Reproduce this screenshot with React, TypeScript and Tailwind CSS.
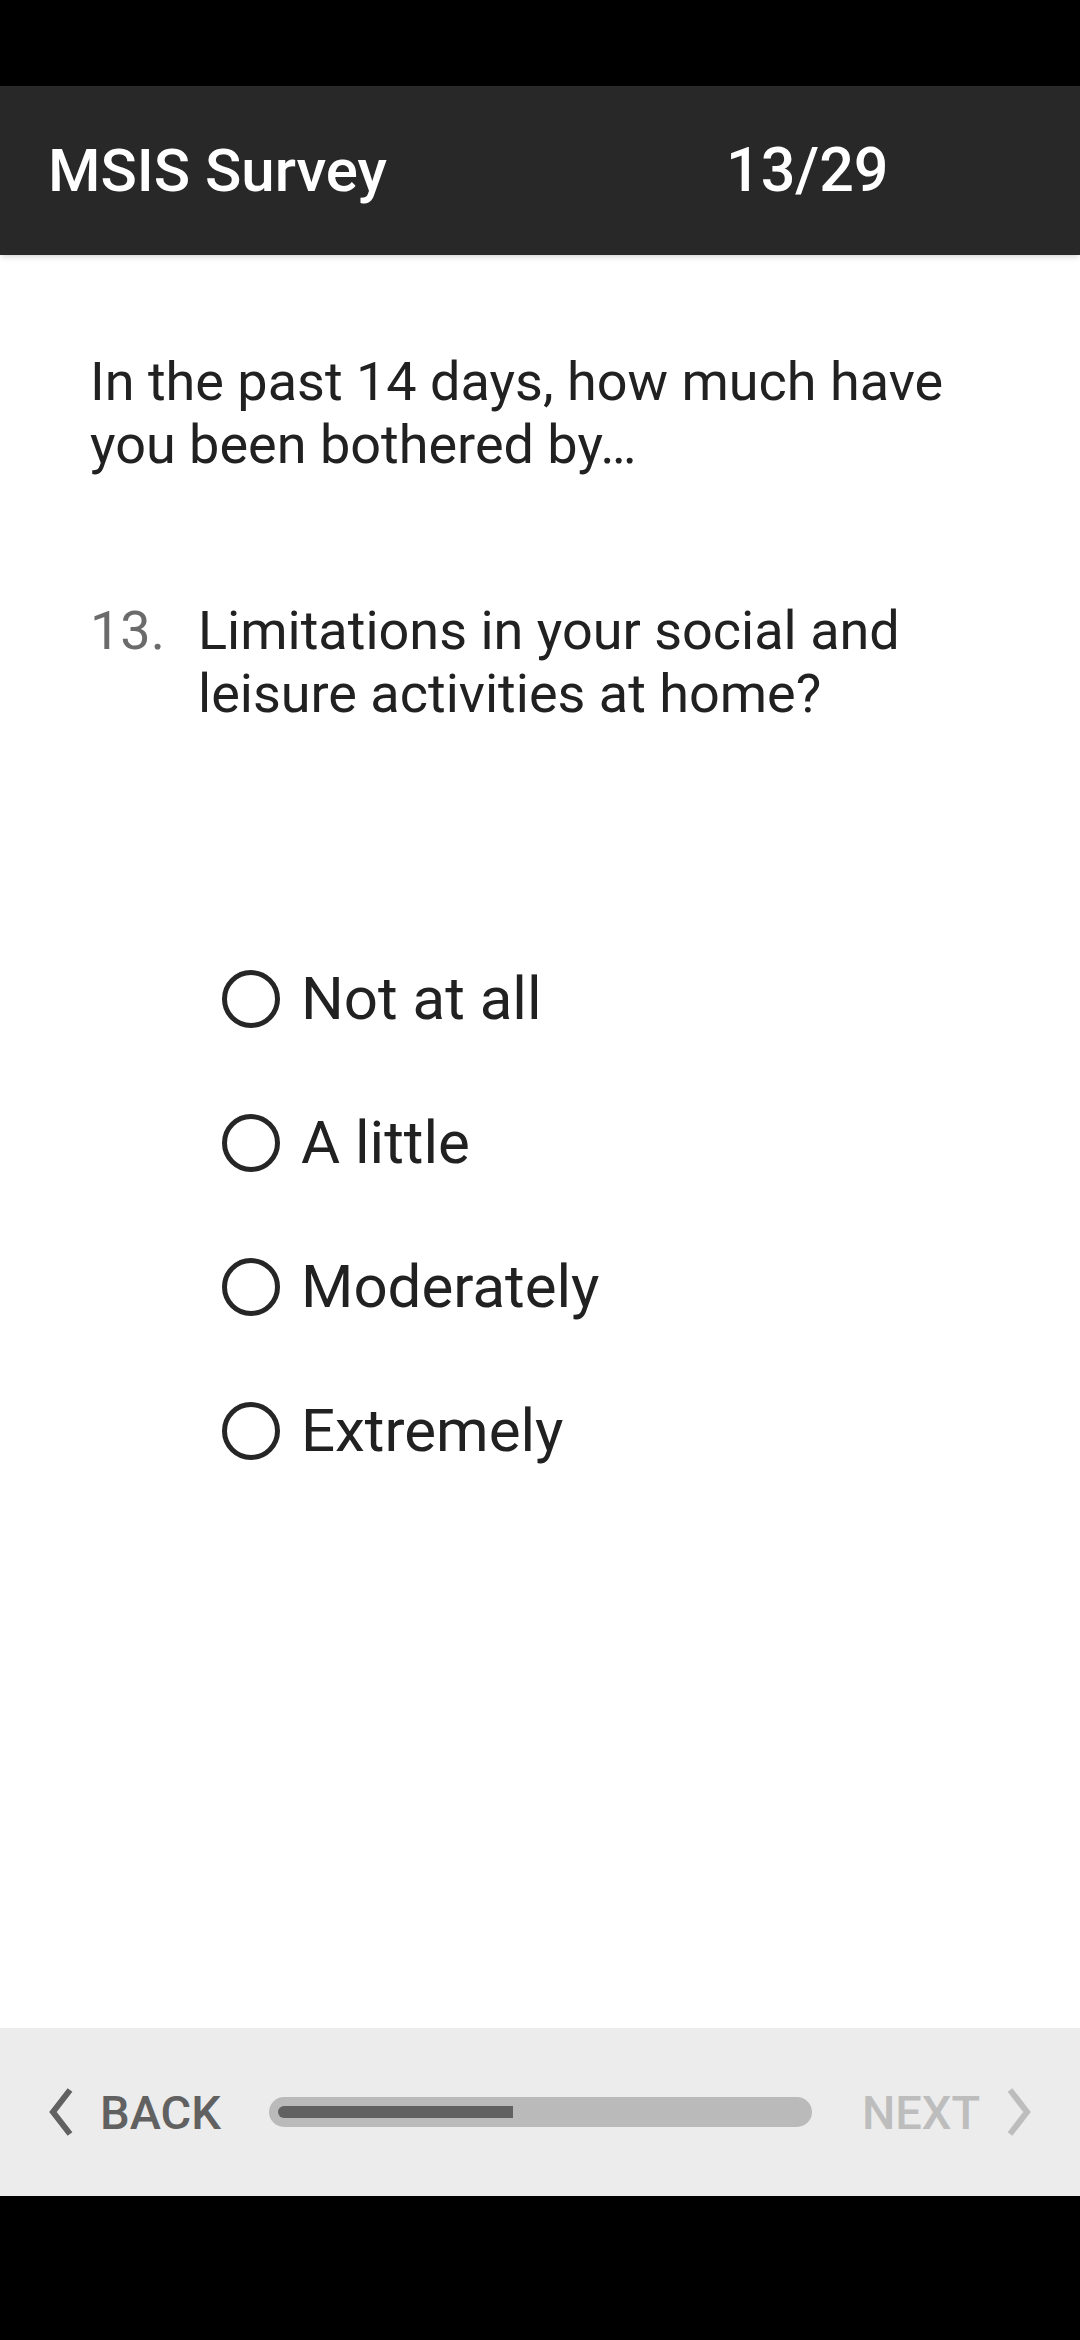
import React from "react";

const options = ["Not at all", "A little", "Moderately", "Extremely"];

const Chevron = ({ dir, color }: { dir: "left" | "right"; color: string }) => (
  <svg width="26" height="50" viewBox="0 0 26 50" className="shrink-0">
    <polyline
      points={dir === "left" ? "22,3 5,25 22,47" : "4,3 21,25 4,47"}
      fill="none"
      stroke={color}
      strokeWidth="6"
    />
  </svg>
);

export default function App() {
  const current = 13;
  const total = 29;
  const pct = (current / total) * 100;

  return (
    <div
      className="flex h-[2340px] w-[1080px] flex-col bg-white"
      style={{ fontFamily: "Roboto, 'Noto Sans', sans-serif" }}
    >
      {/* status bar */}
      <div className="h-[86px] shrink-0 bg-black" />

      {/* app bar */}
      <div className="relative z-10 flex h-[169px] shrink-0 items-center bg-[#282828] pl-[48px] shadow-md">
        <div className="w-[678px] text-[60px] font-medium leading-none text-white">MSIS Survey</div>
        <div className="text-[61px] font-medium leading-none text-white">
          {current}/{total}
        </div>
      </div>

      {/* content */}
      <div className="flex flex-1 flex-col pt-[95px]">
        <p className="pl-[90px] pr-[60px] text-[54px] leading-[63px] text-[#212121]">
          In the past 14 days, how much have you been bothered by…
        </p>

        <div className="mt-[123px] flex pl-[90px] pr-[100px]">
          <span className="w-[108px] shrink-0 text-[54px] leading-[63px] text-[#6b6b6b]">13.</span>
          <span className="text-[54px] leading-[63px] text-[#212121]">
            Limitations in your social and leisure activities at home?
          </span>
        </div>

        <div className="mt-[202px] flex flex-col pl-[222px]">
          {options.map((o) => (
            <div key={o} className="flex h-[144px] items-center gap-[21px]">
              <div className="h-[58px] w-[58px] shrink-0 rounded-full border-[5px] border-[#262626]" />
              <span className="text-[60px] text-[#212121]">{o}</span>
            </div>
          ))}
        </div>
      </div>

      {/* bottom nav */}
      <div className="flex h-[168px] shrink-0 items-center bg-[#ececec]">
        <div className="flex items-center pl-[48px]">
          <Chevron dir="left" color="#616161" />
          <span className="ml-[26px] text-[47px] font-medium leading-none text-[#616161]">BACK</span>
        </div>
        <div className="ml-[48px] flex h-[30px] w-[543px] items-center rounded-full bg-[#bababa] px-[9px]">
          <div className="h-[12px] w-full">
            <div className="h-full rounded-l-full bg-[#616161]" style={{ width: `${pct}%` }} />
          </div>
        </div>
        <div className="ml-[50px] flex items-center">
          <span className="text-[47px] font-medium leading-none text-[#bdbdbd]">NEXT</span>
          <div className="ml-[26px]">
            <Chevron dir="right" color="#bdbdbd" />
          </div>
        </div>
      </div>

      {/* nav bar */}
      <div className="h-[144px] shrink-0 bg-black" />
    </div>
  );
}
